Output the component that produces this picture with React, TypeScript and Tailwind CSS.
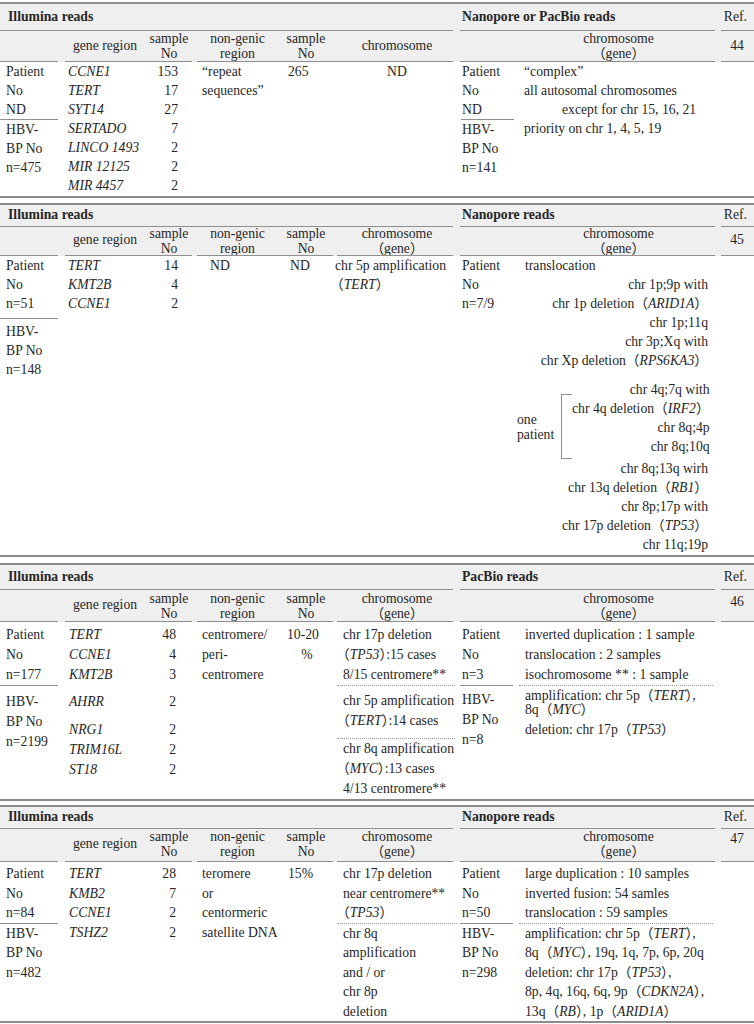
import React from "react";

const COLS = "grid grid-cols-[63px_82px_52px_86px_54px_120px_62px_199px_36px]";
const LINE = "h-px bg-[#8f8f8f]";
const DOT = "border-t border-dotted border-[#9a9a9a]";
const HALT = "[font-feature-settings:'halt']";

function Cp() {
  return <span className={HALT}>）</span>;
}

function Two({ a, b }: { a: React.ReactNode; b: React.ReactNode }) {
  return (
    <div className="flex flex-col items-center leading-[15px] whitespace-nowrap">
      <span>{a}</span>
      <span>{b}</span>
    </div>
  );
}

function TitleRow({ h, nano }: { h: string; nano: string }) {
  return (
    <div className={`grid grid-cols-[457px_261px_36px] bg-[#efefef] ${h}`}>
      <div className="flex flex-col">
        <div className="flex-1 flex items-center pl-[8px] font-bold">Illumina reads</div>
        <div className={`${LINE} mr-[4px]`} />
      </div>
      <div className="flex flex-col">
        <div className="flex-1 flex items-center pl-[5px] font-bold">{nano}</div>
        <div className={`${LINE} ml-[3px] mr-[3px]`} />
      </div>
      <div className="flex flex-col">
        <div className="flex-1 flex items-center justify-end pr-[7px]">Ref.</div>
        <div className={`${LINE} ml-[3px]`} />
      </div>
    </div>
  );
}

function HeaderRow({
  rows,
  split,
  refNo,
  refTop,
}: {
  rows: string;
  split: boolean;
  refNo: string;
  refTop: boolean;
}) {
  return (
    <div className={`${COLS} ${rows} bg-[#efefef]`}>
      <div />
      <div className="flex items-center justify-center pl-[2px]">gene region</div>
      <div className="flex items-center justify-center pr-[4px]">
        <Two a="sample" b="No" />
      </div>
      <div className="flex items-center justify-center pr-[5px]">
        <Two a="non-genic" b="region" />
      </div>
      <div className="flex items-center justify-center pr-[8px]">
        <Two a="sample" b="No" />
      </div>
      <div className="flex items-center justify-center">
        {split ? <Two a="chromosome" b="（gene）" /> : <span>chromosome</span>}
      </div>
      <div className="col-span-2 flex items-center justify-center pl-[62px]">
        <Two a="chromosome" b="（gene）" />
      </div>
      <div
        className={
          refTop
            ? "flex items-start justify-center pt-[2px] pl-[2px]"
            : "flex items-center justify-center pl-[2px]"
        }
      >
        {refNo}
      </div>
      <div className={`${LINE} mr-[5px]`} />
      <div className={`col-span-2 ${LINE} ml-[2px] mr-[5px]`} />
      {split ? (
        <>
          <div className={`col-span-2 ${LINE} mr-[4px]`} />
          <div className={`${LINE} mr-[4px]`} />
        </>
      ) : (
        <div className={`col-span-3 ${LINE} mr-[4px]`} />
      )}
      <div className={`col-span-2 ${LINE} ml-[3px] mr-[3px]`} />
      <div className={`${LINE} ml-[3px]`} />
    </div>
  );
}

function Table1() {
  return (
    <section className="border-y-2 border-[#8c8c8c]">
      <TitleRow h="h-[27px]" nano="Nanopore or PacBio reads" />
      <HeaderRow rows="grid-rows-[30px_1px]" split={false} refNo="44" refTop={false} />
      <div className={`${COLS} leading-[19px] pb-[1px]`}>
        <div className="flex flex-col">
          <div className="pl-[6px]">Patient</div>
          <div className="pl-[6px]">No</div>
          <div className="pl-[6px]">ND</div>
          <div className={`${LINE} mr-[5px]`} />
          <div className="pl-[6px]">HBV-</div>
          <div className="pl-[6px]">BP No</div>
          <div className="pl-[6px]">n=475</div>
        </div>
        <div className="flex flex-col pl-[5px] italic whitespace-nowrap">
          <div>CCNE1</div>
          <div>TERT</div>
          <div>SYT14</div>
          <div>SERTADO</div>
          <div>LINCO 1493</div>
          <div>MIR 12125</div>
          <div>MIR 4457</div>
        </div>
        <div className="flex flex-col text-right pr-[19px]">
          <div>153</div>
          <div>17</div>
          <div>27</div>
          <div>7</div>
          <div>2</div>
          <div>2</div>
          <div>2</div>
        </div>
        <div className="flex flex-col pl-[5px]">
          <div>“repeat</div>
          <div>sequences”</div>
        </div>
        <div className="flex flex-col pl-[5px]">
          <div>265</div>
        </div>
        <div className="flex flex-col text-center">
          <div>ND</div>
        </div>
        <div className="flex flex-col">
          <div className="pl-[5px]">Patient</div>
          <div className="pl-[5px]">No</div>
          <div className="pl-[5px]">ND</div>
          <div className={`${LINE} ml-[4px] mr-[5px]`} />
          <div className="pl-[5px]">HBV-</div>
          <div className="pl-[5px]">BP No</div>
          <div className="pl-[5px]">n=141</div>
        </div>
        <div className="flex flex-col pl-[5px] whitespace-nowrap">
          <div>“complex”</div>
          <div>all autosomal chromosomes</div>
          <div className="pl-[38px]">except for chr 15, 16, 21</div>
          <div>priority on chr 1, 4, 5, 19</div>
        </div>
        <div />
      </div>
    </section>
  );
}

function Table2() {
  const r = "text-right pr-[10px] whitespace-nowrap";
  return (
    <section className="mt-[5px] border-y-2 border-[#8c8c8c]">
      <TitleRow h="h-[21px]" nano="Nanopore reads" />
      <HeaderRow rows="grid-rows-[29px_1px]" split={true} refNo="45" refTop={false} />
      <div className={`${COLS} leading-[19px] pb-[1px]`}>
        <div className="flex flex-col">
          <div className="pl-[6px]">Patient</div>
          <div className="pl-[6px]">No</div>
          <div className="pl-[6px]">n=51</div>
          <div className={`${LINE} mr-[5px] mt-[5px]`} />
          <div className="pl-[6px] mt-[3px]">HBV-</div>
          <div className="pl-[6px]">BP No</div>
          <div className="pl-[6px]">n=148</div>
        </div>
        <div className="flex flex-col pl-[5px] italic">
          <div>TERT</div>
          <div>KMT2B</div>
          <div>CCNE1</div>
        </div>
        <div className="flex flex-col text-right pr-[19px]">
          <div>14</div>
          <div>4</div>
          <div>2</div>
        </div>
        <div className="flex flex-col pl-[13px]">
          <div>ND</div>
        </div>
        <div className="flex flex-col pl-[7px]">
          <div>ND</div>
        </div>
        <div className="flex flex-col whitespace-nowrap">
          <div className="-ml-[2px]">chr 5p amplification</div>
          <div className="-ml-[7px]">
            （<i>TERT</i>）
          </div>
        </div>
        <div className="flex flex-col">
          <div className="pl-[5px]">Patient</div>
          <div className="pl-[5px]">No</div>
          <div className="pl-[5px]">n=7/9</div>
        </div>
        <div className="flex flex-col">
          <div className="pl-[6px]">translocation</div>
          <div className={r}>chr 1p;9p with</div>
          <div className={r}>
            chr 1p deletion（<i>ARID1A</i>）
          </div>
          <div className={r}>chr 1p;11q</div>
          <div className={r}>chr 3p;Xq with</div>
          <div className={r}>
            chr Xp deletion（<i>RPS6KA3</i>）
          </div>
          <div className="mt-[10px] flex items-start">
            <div className="-ml-[2px] mt-[14px] h-[65px] flex items-center">
              <div className="w-[44px] leading-[15px]">
                <div>one</div>
                <div>patient</div>
              </div>
              <div className="w-[11px] self-stretch border-l border-y border-[#8f8f8f]" />
            </div>
            <div className="flex-1 flex flex-col">
              <div className={r}>chr 4q;7q with</div>
              <div className={r}>
                chr 4q deletion（<i>IRF2</i>）
              </div>
              <div className={r}>chr 8q;4p</div>
              <div className={r}>chr 8q;10q</div>
            </div>
          </div>
          <div className={r}>chr 8q;13q wirh</div>
          <div className={r}>
            chr 13q deletion（<i>RB1</i>）
          </div>
          <div className={r}>chr 8p;17p with</div>
          <div className={r}>
            chr 17p deletion（<i>TP53</i>）
          </div>
          <div className={r}>chr 11q;19p</div>
        </div>
        <div />
      </div>
    </section>
  );
}

function Table3() {
  return (
    <section className="mt-[6px] border-y-2 border-[#8c8c8c]">
      <TitleRow h="h-[25px]" nano="PacBio reads" />
      <HeaderRow rows="grid-rows-[31px_1px]" split={true} refNo="46" refTop={true} />
      <div className={`${COLS} leading-[20px] pt-[3px]`}>
        <div className="flex flex-col">
          <div className="pl-[6px]">Patient</div>
          <div className="pl-[6px]">No</div>
          <div className="pl-[6px]">n=177</div>
          <div className={`${LINE} mr-[5px]`} />
          <div className="pl-[6px] mt-[6px]">HBV-</div>
          <div className="pl-[6px]">BP No</div>
          <div className="pl-[6px]">n=2199</div>
        </div>
        <div className="flex flex-col pl-[6px] italic">
          <div>TERT</div>
          <div>CCNE1</div>
          <div>KMT2B</div>
          <div className="mt-[7px]">AHRR</div>
          <div className="mt-[8px]">NRG1</div>
          <div>TRIM16L</div>
          <div>ST18</div>
        </div>
        <div className="flex flex-col text-right pr-[21px]">
          <div>48</div>
          <div>4</div>
          <div>3</div>
          <div className="mt-[7px]">2</div>
          <div className="mt-[8px]">2</div>
          <div>2</div>
          <div>2</div>
        </div>
        <div className="flex flex-col pl-[5px]">
          <div>centromere/</div>
          <div>peri-</div>
          <div>centromere</div>
        </div>
        <div className="flex flex-col items-start pl-[4px]">
          <div className="flex flex-col items-center">
            <div>10-20</div>
            <div className="pl-[8px]">%</div>
          </div>
        </div>
        <div className="flex flex-col whitespace-nowrap">
          <div className="pl-[6px]">chr 17p deletion</div>
          <div className="pl-[6px] -ml-[7px]">
            （<i>TP53</i>
            <Cp />
            :15 cases
          </div>
          <div className="pl-[6px]">8/15 centromere**</div>
          <div className={`${DOT} mr-[2px]`} />
          <div className="pl-[6px] mt-[5px]">chr 5p amplification</div>
          <div className="pl-[6px] -ml-[7px]">
            （<i>TERT</i>
            <Cp />
            :14 cases
          </div>
          <div className={`${DOT} mt-[7px] mr-[2px]`} />
          <div className="pl-[6px]">chr 8q amplification</div>
          <div className="pl-[6px] -ml-[7px]">
            （<i>MYC</i>
            <Cp />
            :13 cases
          </div>
          <div className="pl-[6px]">4/13 centromere**</div>
        </div>
        <div className="flex flex-col">
          <div className="pl-[5px]">Patient</div>
          <div className="pl-[5px]">No</div>
          <div className="pl-[5px]">n=3</div>
          <div className={`${LINE} ml-[3px] mr-[6px]`} />
          <div className="pl-[5px] mt-[4px]">HBV-</div>
          <div className="pl-[5px]">BP No</div>
          <div className="pl-[5px]">n=8</div>
        </div>
        <div className="flex flex-col whitespace-nowrap">
          <div className="pl-[6px]">inverted duplication : 1 sample</div>
          <div className="pl-[6px]">translocation : 2 samples</div>
          <div className="pl-[6px]">isochromosome ** : 1 sample</div>
          <div className={`${DOT} mr-[5px]`} />
          <div className="pl-[6px] mt-[3px] leading-[14px]">
            <div>
              amplification: chr 5p（<i>TERT</i>
              <Cp />,
            </div>
            <div>
              8q（<i>MYC</i>）
            </div>
          </div>
          <div className="pl-[6px] mt-[6px] leading-[14px]">
            deletion: chr 17p（<i>TP53</i>）
          </div>
        </div>
        <div />
      </div>
    </section>
  );
}

function Table4() {
  return (
    <section className="mt-[4px] border-y-2 border-[#8c8c8c]">
      <TitleRow h="h-[20px]" nano="Nanopore reads" />
      <HeaderRow rows="grid-rows-[34px_1px]" split={true} refNo="47" refTop={true} />
      <div className={`${COLS} leading-[19.5px] pt-[2px]`}>
        <div className="flex flex-col">
          <div className="pl-[6px]">Patient</div>
          <div className="pl-[6px]">No</div>
          <div className="pl-[6px]">n=84</div>
          <div className={`${LINE} mr-[5px]`} />
          <div className="pl-[6px]">HBV-</div>
          <div className="pl-[6px]">BP No</div>
          <div className="pl-[6px]">n=482</div>
        </div>
        <div className="flex flex-col pl-[6px] italic">
          <div>TERT</div>
          <div>KMB2</div>
          <div>CCNE1</div>
          <div>TSHZ2</div>
        </div>
        <div className="flex flex-col text-right pr-[21px]">
          <div>28</div>
          <div>7</div>
          <div>2</div>
          <div>2</div>
        </div>
        <div className="flex flex-col pl-[5px] whitespace-nowrap">
          <div>teromere</div>
          <div>or</div>
          <div>centormeric</div>
          <div>satellite DNA</div>
        </div>
        <div className="flex flex-col pl-[5px]">
          <div>15%</div>
        </div>
        <div className="flex flex-col whitespace-nowrap">
          <div className="pl-[6px]">chr 17p deletion</div>
          <div className="pl-[6px]">near centromere**</div>
          <div className="pl-[6px] -ml-[7px]">
            （<i>TP53</i>）
          </div>
          <div className={DOT} />
          <div className="pl-[6px]">chr 8q</div>
          <div className="pl-[6px]">amplification</div>
          <div className="pl-[6px]">and / or</div>
          <div className="pl-[6px]">chr 8p</div>
          <div className="pl-[6px]">deletion</div>
        </div>
        <div className="flex flex-col">
          <div className="pl-[5px]">Patient</div>
          <div className="pl-[5px]">No</div>
          <div className="pl-[5px]">n=50</div>
          <div className={`${LINE} ml-[3px] mr-[6px]`} />
          <div className="pl-[5px]">HBV-</div>
          <div className="pl-[5px]">BP No</div>
          <div className="pl-[5px]">n=298</div>
        </div>
        <div className="flex flex-col whitespace-nowrap">
          <div className="pl-[6px]">large duplication : 10 samples</div>
          <div className="pl-[6px]">inverted fusion: 54 samles</div>
          <div className="pl-[6px]">translocation : 59 samples</div>
          <div className={`${DOT} mr-[5px]`} />
          <div className="pl-[6px]">
            amplification: chr 5p（<i>TERT</i>
            <Cp />,
          </div>
          <div className="pl-[6px]">
            8q（<i>MYC</i>
            <Cp />, 19q, 1q, 7p, 6p, 20q
          </div>
          <div className="pl-[6px]">
            deletion: chr 17p（<i>TP53</i>
            <Cp />,
          </div>
          <div className="pl-[6px]">
            8p, 4q, 16q, 6q, 9p（<i>CDKN2A</i>
            <Cp />,
          </div>
          <div className="pl-[6px]">
            13q（<i>RB</i>
            <Cp />, 1p（<i>ARID1A</i>）
          </div>
        </div>
        <div />
      </div>
    </section>
  );
}

export default function App() {
  return (
    <div className="w-[754px] min-h-[1024px] bg-white pt-[2px] text-[13.7px] text-[#262626] font-['Liberation_Serif','Noto_Sans_CJK_JP',serif]">
      <Table1 />
      <Table2 />
      <Table3 />
      <Table4 />
    </div>
  );
}
